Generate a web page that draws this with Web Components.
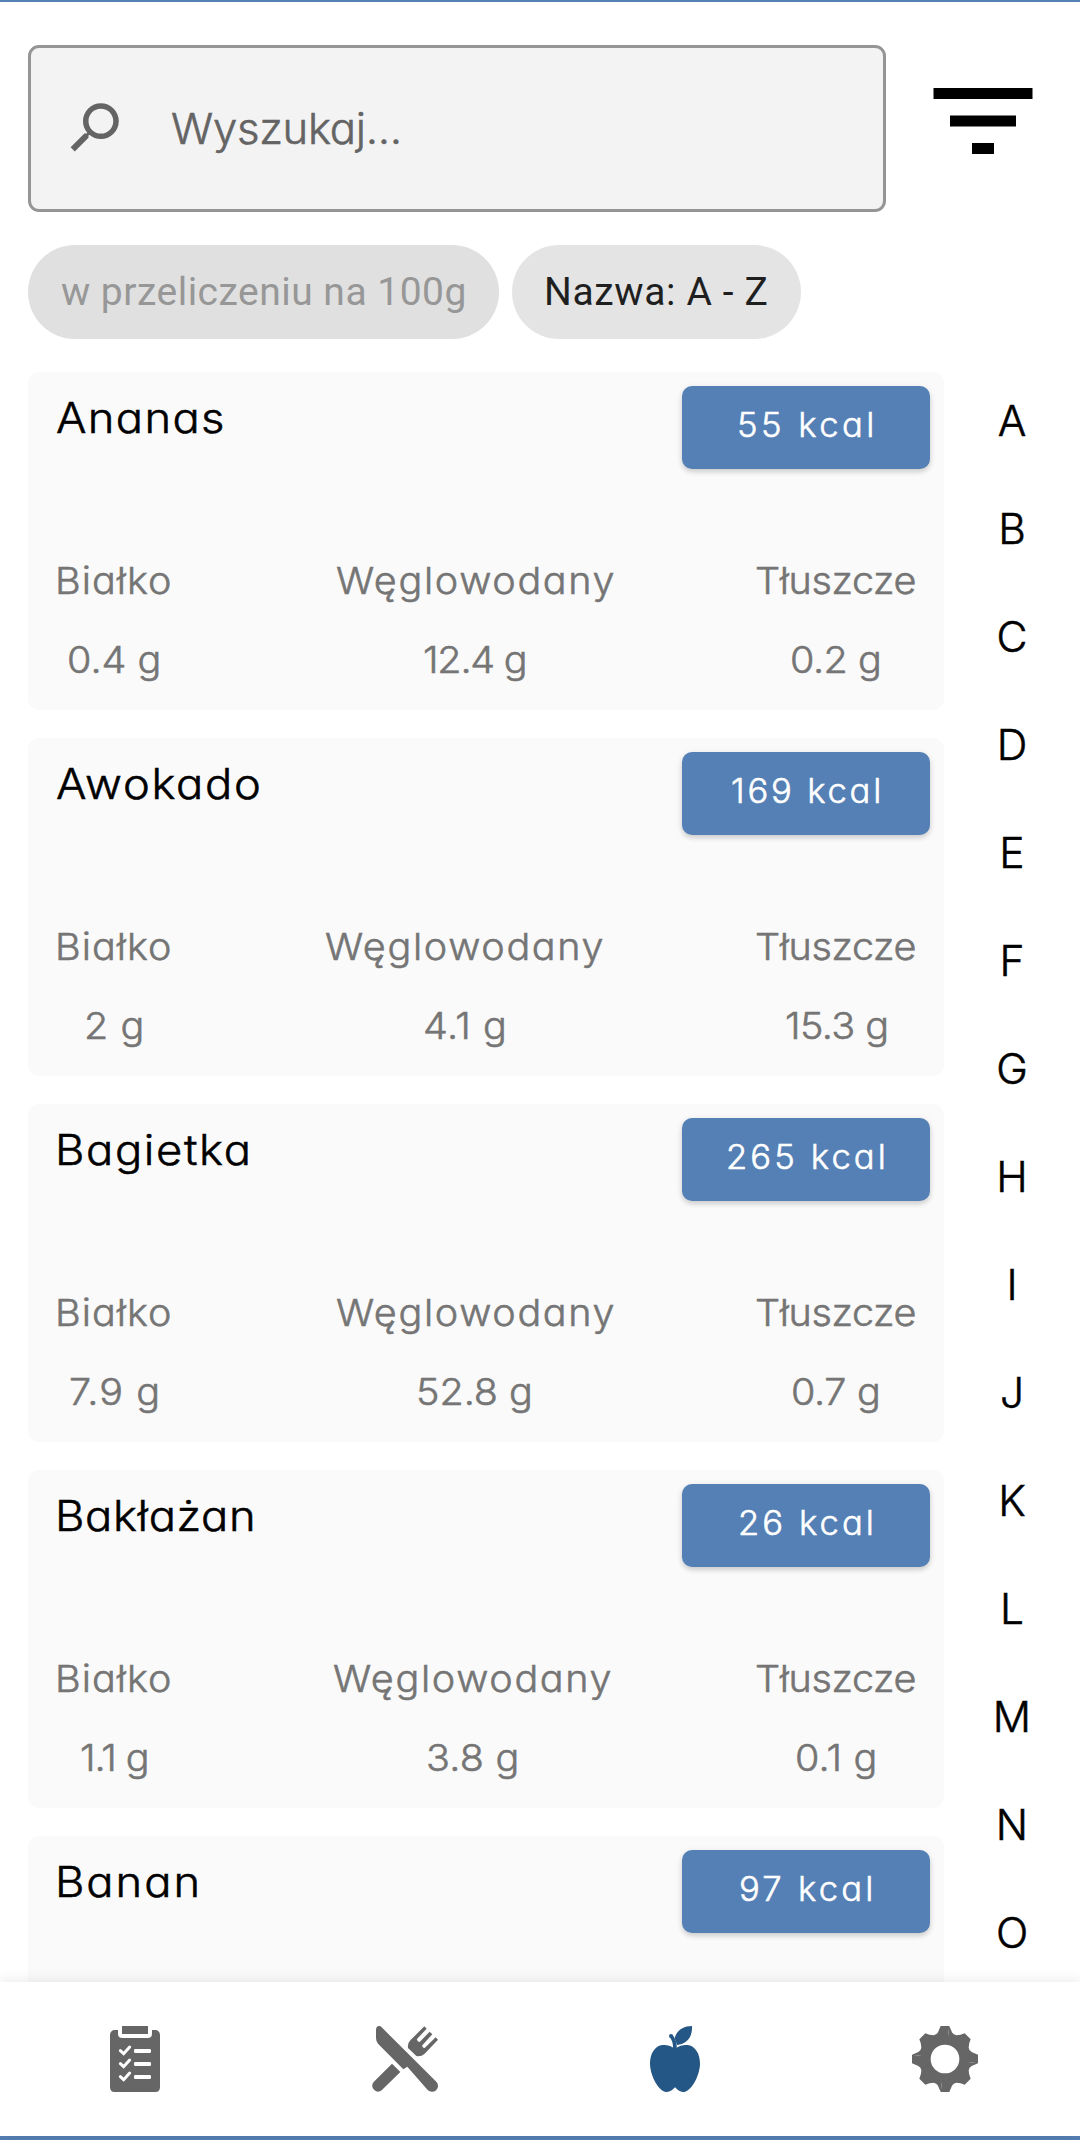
<!DOCTYPE html>
<html lang="pl">
<head>
<meta charset="utf-8">
<title>Produkty</title>
<style>
  html, body { margin: 0; background: #fff; }
  body { width: 1080px; height: 2140px; overflow: hidden; font-family: Inter, "Noto Sans", sans-serif; font-weight: 300; font-feature-settings: "cv11"; -webkit-text-stroke: .55px currentColor; color: #000; }
</style>
</head>
<body>
<food-app></food-app>
<script>
const define = (name, html, setup) => customElements.define(name, class extends HTMLElement {
  connectedCallback() {
    if (this.shadowRoot) return;
    const root = this.attachShadow({ mode: 'open' });
    root.innerHTML = typeof html === 'function' ? html(this) : html;
    if (setup) setup(this, root);
  }
});

/* A line of text tracked so that its visible glyphs span exactly `span` pixels.
   --stretch widens the glyphs themselves before the tracking is worked out. */
const ctx = document.createElement('canvas').getContext('2d');
define('fit-text', el => `<style>
    :host { display: block; white-space: nowrap; flex: none; }
    span { display: inline-block; white-space: pre; transform-origin: 0 50%; -webkit-text-stroke-color: currentColor; }
  </style><span>${el.getAttribute('text')}</span>`,
  (el, root) => {
    const span = root.querySelector('span'), text = el.getAttribute('text');
    const cs = getComputedStyle(span);
    const stretch = parseFloat(cs.getPropertyValue('--stretch')) || 1;
    const width = parseFloat(el.getAttribute('span'));
    const want = width / stretch;
    ctx.font = `${cs.fontWeight} ${parseFloat(cs.fontSize) * 10}px ${cs.fontFamily}`;
    const m = ctx.measureText(text);
    const lsb = -m.actualBoundingBoxLeft / 10, rsb = (m.width - m.actualBoundingBoxRight) / 10;
    const ink = span.getBoundingClientRect().width - lsb - rsb;
    const ls = (want - ink) / (text.length - 1);
    span.style.letterSpacing = ls + 'px';
    span.style.marginLeft = -lsb * stretch + 'px';
    span.style.marginRight = -(rsb + ls) + 'px';
    if (stretch !== 1) span.style.transform = `scaleX(${stretch})`;
    el.style.width = width + 'px';
  });

define('search-field', `<style>
    :host { display: flex; box-sizing: border-box; width: 858px; height: 167px; border: 3px solid #959595; border-radius: 11px; background: #f3f3f3; align-items: center; padding-left: 29.5px; color: #646464; font-size: 42.8px; line-height: 60px; }
    svg { display: block; width: 66px; height: 66px; fill: #646464; margin-top: -2px; }
    fit-text { margin-left: 45px; --stretch: 1.02; }
  </style>
  <svg viewBox="0 0 24 24"><path transform="matrix(-1 0 0 1 24 0)" d="M9.5 3A6.5 6.5 0 0 1 16 9.5C16 11.11 15.41 12.59 14.44 13.73L14.71 14H15.5L20.5 19L19 20.5L14 15.5V14.71L13.73 14.44C12.59 15.41 11.11 16 9.5 16A6.5 6.5 0 0 1 3 9.5A6.5 6.5 0 0 1 9.5 3M9.5 5C7 5 5 7 5 9.5C5 12 7 14 9.5 14C12 14 14 12 14 9.5C14 7 12 5 9.5 5Z"/></svg>
  <fit-text text="Wyszukaj..." span="227"></fit-text>`);

define('filter-button', `<style>
    :host { display: block; width: 100px; height: 66px; }
    svg { display: block; }
  </style>
  <svg width="100" height="66" viewBox="0 0 100 66"><path d="M.5 0H99.5V11H.5ZM17 27.5H83V38.5H17ZM39 55H61V66H39Z"/></svg>`);

define('filter-chip', el => `<style>
    :host { display: flex; box-sizing: border-box; height: 94px; padding: 0 34.5px 0 35.5px; border-radius: 47px; background: #e4e4e4; color: #1f1f1f; font: 400 39px/94px Roboto, sans-serif; -webkit-text-stroke-width: 0; }
    :host([muted]) { background: #e0e0e0; color: #979797; padding: 0 34.5px 0 33.5px; }
  </style><fit-text text="${el.getAttribute('text')}" span="${el.getAttribute('span')}"></fit-text>`);

define('kcal-badge', el => `<style>
    :host { display: flex; justify-content: center; width: 248px; height: 83px; border-radius: 10px; background: #5580b5; color: #fff; font-size: 33.6px; line-height: 77px; --stretch: 1.03; box-shadow: 0 3px 5px rgba(0,0,0,.15), 0 1px 8px rgba(0,0,0,.06); }
    fit-text { margin-left: -1px; }
  </style><fit-text text="${el.getAttribute('text')}" span="${el.getAttribute('span')}"></fit-text>`);

define('macro-cell', el => `<style>
    :host { display: flex; flex-direction: column; align-items: center; flex: none; color: #757575; font-size: 37.3px; line-height: 78px; --stretch: 1.06; }
    .value { line-height: 80px; }
  </style>
  <fit-text text="${el.getAttribute('label')}" span="${el.getAttribute('label-span')}"></fit-text>
  <fit-text class="value" text="${el.getAttribute('value')}" span="${el.getAttribute('value-span')}"></fit-text>`);

define('food-card', `<style>
    :host { display: block; box-sizing: border-box; height: 338px; flex: none; border-radius: 11px; background: #fafafa; }
    header { display: flex; justify-content: space-between; align-items: flex-start; padding: 0 14px 0 30px; height: 169.6px; box-sizing: border-box; }
    .badge { padding-top: 14px; }
    .macros { display: flex; padding: 0 29px 0 30.5px; }
    ::slotted(fit-text) { font-size: 42.3px; line-height: 91px; }
    ::slotted(macro-cell:last-of-type) { margin-left: auto; }
  </style>
  <header><slot name="title"></slot><div class="badge"><slot name="badge"></slot></div></header>
  <div class="macros"><slot></slot></div>`);

define('letter-index', `<style>
    :host { display: flex; flex-direction: column; align-items: center; width: 136px; padding-top: 27.8px; font-size: 42.5px; line-height: 108px; }
    span { flex: none; height: 108px; }
  </style>${[...'ABCDEFGHIJKLMNO'].map(c => `<span>${c}</span>`).join('')}`);

const gearSector = 'M99 99L112 0L120 19Q124 27 133 28Q146 28 158 22L176 40Q170 52 170 65Q171 74 179 78L198 86V112Z';
const icons = {
  list: `<path fill-rule="evenodd" d="M36 12H48V23Q48 36 61 36H137Q150 36 150 23V12H162Q174 15 174 28V184Q174 198 160 198H38Q24 198 24 184V28Q24 15 36 12Z"/><path d="M60 0H138V24H60Z"/>
    ${[0, 39, 78].map(d => `<g transform="translate(0 ${d})"><path d="M55 74L65 83L83 63" fill="none" stroke="#fff" stroke-width="9" stroke-linecap="round"/><rect x="96" y="69" width="51" height="12" rx="4" fill="#fff"/></g>`).join('')}`,
  meals: `<path d="M12 12C12 4 16 0 21 0C25 0 27 2 29 4L193 167A17.5 17.5 0 0 1 167 192L106 122L94 130L18 53Q12 46 12 36Z"/>
    <path d="M60 113L85 138L29 193A17.5 17.5 0 0 1 5 168Z"/>
    <path d="M157 1L115 43Q106 52 108 66L133 90Q147 93 158 83L198 41L191 34L158 66Q150 66 151 58L181 25L173 17L143 48Q134 47 135 39L164 8Z"/>`,
  food: `<path d="M99 68C85 58 72 56 62 57C38 59 24 84 24 112C24 146 46 190 68 197C80 200 88 196 99 184C110 196 118 200 130 197C152 190 174 146 174 112C174 84 160 59 136 57C126 56 113 58 99 68Z"/>
    <path d="M87 30Q99 42 99 70" fill="none" stroke="currentColor" stroke-width="11"/><circle cx="87" cy="30" r="6"/><path d="M150 0C122 0 104 14 98 36L105 57C134 54 152 34 150 0Z"/>`,
  settings: `<circle cx="99" cy="99" r="68"/>${[0, 90, 180, 270].map(a => `<path transform="rotate(${a} 99 99)" d="${gearSector}"/>`).join('')}<circle cx="99" cy="99" r="43" fill="#fff"/>`
};
define('nav-item', el => `<style>
    :host { display: flex; align-items: center; justify-content: center; color: #666; }
    :host([active]) { color: #245785; }
    svg { display: block; width: 66px; height: 66px; fill: currentColor; }
  </style><svg viewBox="0 0 198 198">${icons[el.getAttribute('icon')]}</svg>`);

define('bottom-nav', `<style>
    :host { display: grid; grid-template-columns: repeat(4, 1fr); height: 154px; flex: none; background: #fff; box-shadow: 0 0 14px rgba(0,0,0,.1); position: relative; }
  </style>
  <nav-item icon="list"></nav-item><nav-item icon="meals"></nav-item><nav-item icon="food" active></nav-item><nav-item icon="settings"></nav-item>`);

const foods = [
  ['Ananas', 165.5, '55 kcal', 132, 279, ['0.4 g', 89], ['12.4 g', 100], ['0.2 g', 86.5]],
  ['Awokado', 202, '169 kcal', 146, 268.5, ['2 g', 54.5], ['4.1 g', 78.5], ['15.3 g', 99.5]],
  ['Bagietka', 188, '265 kcal', 154.5, 279, ['7.9 g', 86.5], ['52.8 g', 111], ['0.7 g', 84.5]],
  ['Bakłażan', 193, '26 kcal', 130.5, 276, ['1.1 g', 65], ['3.8 g', 88], ['0.1 g', 77]],
  ['Banan', 137.5, '97 kcal', 129.5]
];
const card = ([name, w, kcal, kw, mid, a, b, c]) => `
  <food-card>
    <fit-text slot="title" style="--stretch:1.07;margin-left:${name[0] === 'A' ? -1.5 : 1.3}px" text="${name}" span="${w}"></fit-text>
    <kcal-badge slot="badge" text="${kcal}" span="${kw}"></kcal-badge>
    ${a ? `<macro-cell label="Białko" label-span="111" value="${a[0]}" value-span="${a[1]}"></macro-cell>
    <macro-cell style="margin-left:${mid - 112}px" label="Węglowodany" label-span="277" value="${b[0]}" value-span="${b[1]}"></macro-cell>
    <macro-cell label="Tłuszcze" label-span="157.7" value="${c[0]}" value-span="${c[1]}"></macro-cell>` : ''}
  </food-card>`;

define('food-app', `<style>
    :host { display: flex; flex-direction: column; box-sizing: border-box; width: 1080px; height: 2140px; border-top: 2px solid #5580b5; border-bottom: 4px solid #5580b5; background: #fff; }
    .top { display: flex; align-items: flex-start; gap: 47px; padding: 43px 0 0 28px; }
    filter-button { margin-top: 43px; }
    .chips { display: flex; gap: 13px; padding: 33px 0 0 28px; }
    main { display: flex; justify-content: space-between; flex: 1; min-height: 0; overflow: hidden; }
    .list { display: flex; flex-direction: column; gap: 28px; width: 916px; padding: 33px 0 0 28px; }
  </style>
  <div class="top"><search-field></search-field><filter-button></filter-button></div>
  <div class="chips"><filter-chip muted text="w przeliczeniu na 100g" span="402.5"></filter-chip><filter-chip text="Nazwa: A - Z" span="219.5"></filter-chip></div>
  <main><div class="list">${foods.map(card).join('')}</div><letter-index></letter-index></main>
  <bottom-nav></bottom-nav>`);
</script>
</body>
</html>
